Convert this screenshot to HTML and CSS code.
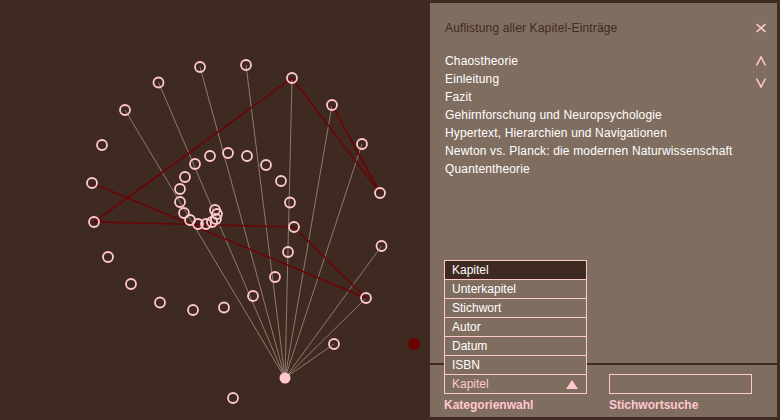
FILE: index.html
```html
<!DOCTYPE html>
<html lang="de">
<head>
<meta charset="UTF-8">
<title>Kapitel-Netz</title>
<link rel="stylesheet" href="styles.css">
</head>
<body>
<div class="app">
  <svg class="graph" width="430" height="420" viewBox="0 0 430 420">
    <g class="links">
      <line x1="285" y1="378" x2="125" y2="110"/>
      <line x1="285" y1="378" x2="158.5" y2="82.5"/>
      <line x1="285" y1="378" x2="200" y2="67"/>
      <line x1="285" y1="378" x2="246" y2="65"/>
      <line x1="285" y1="378" x2="292" y2="78"/>
      <line x1="285" y1="378" x2="332" y2="105"/>
      <line x1="285" y1="378" x2="362" y2="144"/>
      <line x1="285" y1="378" x2="381.5" y2="246"/>
      <line x1="285" y1="378" x2="366" y2="298"/>
      <line x1="285" y1="378" x2="334" y2="344"/>
    </g>
    <g class="refs">
      <line x1="292" y1="78" x2="94" y2="222"/>
      <line x1="292" y1="78" x2="380" y2="193"/>
      <line x1="332" y1="105" x2="380" y2="193"/>
      <line x1="92" y1="183" x2="366" y2="298"/>
      <line x1="94" y1="222" x2="294" y2="227"/>
      <line x1="294" y1="227" x2="366" y2="298"/>
    </g>
    <g class="nodes">
      <circle cx="158.5" cy="82.5" r="5"/>
      <circle cx="200" cy="67" r="5"/>
      <circle cx="246" cy="65" r="5"/>
      <circle cx="292" cy="78" r="5"/>
      <circle cx="332" cy="105" r="5"/>
      <circle cx="362" cy="144" r="5"/>
      <circle cx="380" cy="193" r="5"/>
      <circle cx="381.5" cy="246" r="5"/>
      <circle cx="366" cy="298" r="5"/>
      <circle cx="334" cy="344" r="5"/>
      <circle cx="233" cy="398" r="5"/>
      <circle cx="125" cy="110" r="5"/>
      <circle cx="102" cy="145" r="5"/>
      <circle cx="92" cy="183" r="5"/>
      <circle cx="94" cy="222" r="5"/>
      <circle cx="108" cy="257" r="5"/>
      <circle cx="131" cy="284" r="5"/>
      <circle cx="160" cy="302.5" r="5"/>
      <circle cx="193" cy="310" r="5"/>
      <circle cx="224" cy="307.5" r="5"/>
      <circle cx="253" cy="296" r="5"/>
      <circle cx="275" cy="277" r="5"/>
      <circle cx="288" cy="252" r="5"/>
      <circle cx="294" cy="227" r="5"/>
      <circle cx="290" cy="202.5" r="5"/>
      <circle cx="281" cy="181" r="5"/>
      <circle cx="266" cy="165" r="5"/>
      <circle cx="247" cy="156" r="5"/>
      <circle cx="228" cy="153" r="5"/>
      <circle cx="210" cy="156" r="5"/>
      <circle cx="195" cy="164" r="5"/>
      <circle cx="185" cy="177" r="5"/>
      <circle cx="180" cy="189" r="5"/>
      <circle cx="180" cy="202" r="5"/>
      <circle cx="184" cy="213" r="5"/>
      <circle cx="190" cy="220" r="5"/>
      <circle cx="198" cy="224" r="5"/>
      <circle cx="206" cy="224" r="5"/>
      <circle cx="212" cy="222" r="5"/>
      <circle cx="216" cy="219" r="5"/>
      <circle cx="217" cy="214" r="5"/>
      <circle cx="215" cy="210" r="5"/>
    </g>
    <circle class="hub" cx="285" cy="378" r="5.5"/>
    <circle class="marker" cx="414" cy="344" r="6"/>
  </svg>

  <div class="panel">
    <div class="panel-main">
      <div class="panel-head">
        <span class="panel-title">Auflistung aller Kapitel-Einträge</span>
        <svg class="icon" width="12" height="10" viewBox="0 0 12 10"><path d="M1.5 1 L10.5 9 M10.5 1 L1.5 9"/></svg>
      </div>
      <div class="entries">
        <ul class="entry-list">
          <li>Chaostheorie</li>
          <li>Einleitung</li>
          <li>Fazit</li>
          <li>Gehirnforschung und Neuropsychologie</li>
          <li>Hypertext, Hierarchien und Navigationen</li>
          <li>Newton vs. Planck: die modernen Naturwissenschaft</li>
          <li>Quantentheorie</li>
        </ul>
        <div class="scroll">
          <svg class="icon" width="12" height="10" viewBox="0 0 12 10"><path d="M1.5 9.5 L6 1 L10.5 9.5"/></svg>
          <svg class="icon" width="12" height="10" viewBox="0 0 12 10"><path d="M1.5 0.5 L6 9 L10.5 0.5"/></svg>
        </div>
      </div>
    </div>

    <div class="panel-bottom">
      <div class="field">
        <div class="select">
          <ul class="options">
            <li class="active">Kapitel</li>
            <li>Unterkapitel</li>
            <li>Stichwort</li>
            <li>Autor</li>
            <li>Datum</li>
            <li>ISBN</li>
          </ul>
          <span>Kapitel</span>
          <span class="arrow"></span>
        </div>
        <label>Kategorienwahl</label>
      </div>
      <div class="field">
        <input type="text" class="search">
        <label>Stichwortsuche</label>
      </div>
    </div>
  </div>
</div>
</body>
</html>
```

FILE: styles.css
```css
body {
  margin: 0;
  background-color: #3f2a21;
  font-family: "Liberation Sans", Arial, sans-serif;
  font-size: 12px;
}

.app {
  display: flex;
  width: 780px;
  height: 420px;
  overflow: hidden;
}

.graph {
  flex: none;
  display: block;
}

.links line {
  stroke: #8d7b6d;
  stroke-width: 1;
}

.refs line {
  stroke: #6a0505;
  stroke-width: 1.6;
}

.nodes circle {
  fill: none;
  stroke: #ffc7cf;
  stroke-width: 1.8;
}

.hub {
  fill: #ffc7cf;
}

.marker {
  fill: #6b0000;
}

.panel {
  width: 347px;
  height: 414px;
  margin-top: 3px;
  background-color: #7f6e60;
  display: flex;
  flex-direction: column;
}

.panel-main {
  flex: 1;
  padding: 17px 10px 0 15px;
  letter-spacing: 0.15px;
}

.panel-head {
  display: flex;
  justify-content: space-between;
  align-items: center;
  height: 16px;
}

.panel-title {
  color: #3f2a21;
}

.icon {
  display: block;
}

.icon path {
  fill: none;
  stroke: #ffc7cf;
  stroke-width: 1.6;
}

.entries {
  display: flex;
  justify-content: space-between;
  margin-top: 16px;
}

.entry-list {
  list-style: none;
  margin: 0;
  padding: 0;
  color: #fff;
  line-height: 18px;
}

.scroll {
  display: flex;
  flex-direction: column;
  gap: 12px;
  padding-top: 4px;
}

.panel-bottom {
  box-sizing: border-box;
  height: 54px;
  border-top: 2px solid #3f2a21;
  display: flex;
  gap: 22px;
  padding: 9px 0 0 14px;
}

.field {
  display: flex;
  flex-direction: column;
  width: 143px;
}

.field label {
  margin-top: 4px;
  color: #ffc7cf;
  font-weight: bold;
  line-height: 14px;
}

.select {
  position: relative;
  box-sizing: border-box;
  height: 20px;
  border: 1px solid #ffc7cf;
  padding: 0 8px 0 7px;
  color: #ffc7cf;
  line-height: 18px;
  display: flex;
  justify-content: space-between;
  align-items: center;
}

.arrow {
  width: 0;
  height: 0;
  border-left: 6px solid transparent;
  border-right: 6px solid transparent;
  border-bottom: 9px solid #ffc7cf;
}

.options {
  position: absolute;
  left: -1px;
  right: -1px;
  bottom: 100%;
  margin: 0;
  padding: 0;
  list-style: none;
  border: 1px solid #ffc7cf;
  border-bottom: none;
  background-color: #7f6e60;
  color: #fff;
}

.options li {
  height: 18px;
  line-height: 18px;
  padding-left: 7px;
  border-bottom: 1px solid #ffc7cf;
}

.options li.active {
  background-color: #3f2a21;
}

.search {
  box-sizing: border-box;
  width: 143px;
  height: 20px;
  margin: 0;
  border: 1px solid #ffc7cf;
  background: transparent;
  outline: none;
}
```
